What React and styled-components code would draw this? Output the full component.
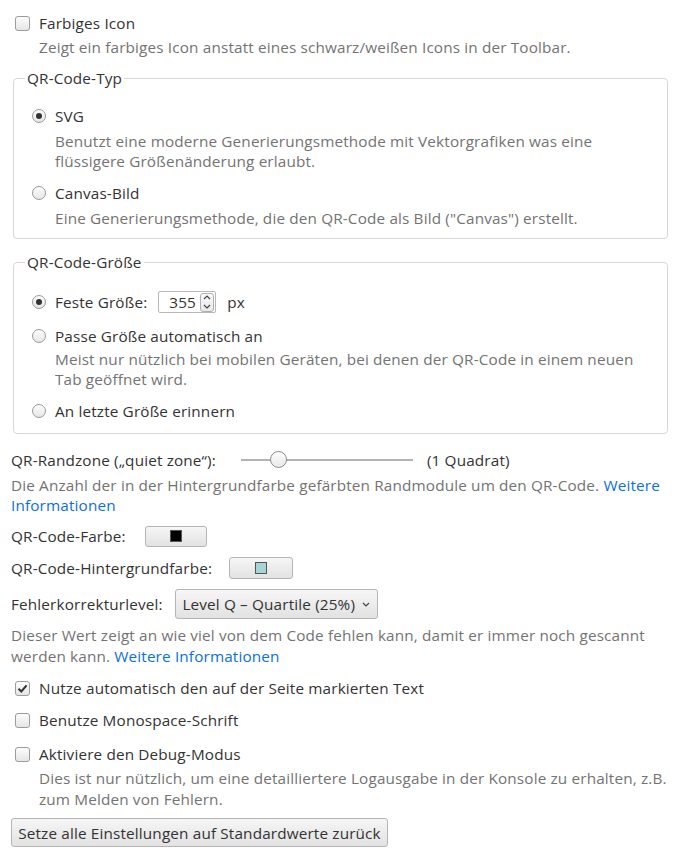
import React from 'react'
import styled, { createGlobalStyle } from 'styled-components'

const GlobalStyle = createGlobalStyle`
  body {
    margin: 0;
    background: #fff;
    font-family: "Open Sans", "DejaVu Sans", sans-serif;
    font-size: 15.3px;
    letter-spacing: 0.15px;
    color: #333;
  }
`

const Page = styled.div`
  padding: 11px 12px 8px 13px;
  width: 655px;
`

const Row = styled.label`
  display: flex;
  align-items: center;
  height: 24px;
  gap: 9px;
  padding-left: ${p => p.indent ?? 2}px;
`

const Desc = styled.div`
  color: #737373;
  line-height: ${p => p.lh ?? 20}px;
  padding-left: ${p => p.indent ?? 26}px;
  margin-top: ${p => p.top ?? 2}px;
`

const Block = styled.div`
  margin-bottom: ${p => p.gap ?? 10}px;
  margin-left: ${p => p.shift ?? 0}px;
  margin-top: ${p => p.top ?? 0}px;
`

const Box = styled.span`
  width: 15px;
  height: 15px;
  box-sizing: border-box;
  border: 1px solid #9b9b9b;
  border-radius: 3px;
  background: linear-gradient(#fcfcfc, #e6e6e6);
  display: flex;
  align-items: center;
  justify-content: center;
  flex: none;
`

const Radio = styled.span`
  width: 14px;
  height: 14px;
  box-sizing: border-box;
  border: 1px solid #9b9b9b;
  border-radius: 50%;
  background: linear-gradient(#fcfcfc, #e6e6e6);
  display: flex;
  align-items: center;
  justify-content: center;
  flex: none;
  &::after {
    content: '';
    width: 6px;
    height: 6px;
    border-radius: 50%;
    background: ${p => (p.checked ? '#333' : 'transparent')};
  }
`

const Fieldset = styled.fieldset`
  margin: ${p => p.top ?? 0}px 0 0 0;
  border: 1px solid #d6d6d6;
  border-radius: 4px;
  padding: ${p => p.pt ?? 16}px 17px 10px 17px;
`

const Legend = styled.legend`
  padding: 0 2px;
  margin-left: -6px;
  line-height: 20px;
`

const Line = styled.div`
  display: flex;
  align-items: center;
  gap: ${p => p.gap ?? 12}px;
  min-height: 24px;
`

const NumberBox = styled.span`
  display: flex;
  align-items: center;
  justify-content: space-between;
  width: 58px;
  height: 22px;
  box-sizing: border-box;
  border: 1px solid #b8b8b8;
  border-radius: 2px;
  padding: 0 1px 0 10px;
`

const Spin = styled.span`
  width: 14px;
  height: 19px;
  box-sizing: border-box;
  border: 1px solid #b0b0b0;
  border-radius: 3px;
  background: linear-gradient(#fafafa, #e8e8e8);
  display: flex;
  flex-direction: column;
  align-items: center;
  justify-content: space-around;
`

const Track = styled.span`
  position: relative;
  width: 172px;
  height: 2px;
  background: #b3b3b3;
  margin: 0 2px 0 13px;
`

const Thumb = styled.span`
  position: absolute;
  left: 29px;
  top: -8px;
  width: 17px;
  height: 17px;
  box-sizing: border-box;
  border: 1px solid #8a8a8a;
  border-radius: 50%;
  background: linear-gradient(#fdfdfd, #e9e9e9);
`

const Link = styled.a`
  color: #0a6fe0;
  text-decoration: none;
`

const Button = styled.button`
  font: inherit;
  letter-spacing: inherit;
  color: #333;
  height: ${p => p.h || 21}px;
  width: ${p => p.w}px;
  box-sizing: border-box;
  border: 1px solid #b5b5b5;
  border-radius: 3px;
  background: linear-gradient(#f6f6f6, #e2e2e2);
  display: flex;
  align-items: center;
  justify-content: center;
  gap: 7px;
  padding: 0;
  flex: none;
`

const Swatch = styled.span`
  width: 12px;
  height: 12px;
  box-sizing: border-box;
  border: 1px solid #555;
  background: ${p => p.color};
`

const Check = () => (
  <svg width="11" height="11" viewBox="0 0 11 11">
    <path d="M1.5 5.8 L4.3 8.5 L9.6 2.3" fill="none" stroke="#333" strokeWidth="2" />
  </svg>
)

const Chevron = ({ up }) => (
  <svg width="8" height="5" viewBox="0 0 8 5">
    <path d={up ? 'M1 4 L4 1 L7 4' : 'M1 1 L4 4 L7 1'} fill="none" stroke="#444" strokeWidth="1.2" />
  </svg>
)

function CheckOption({ checked, label, desc, gap }) {
  return (
    <Block gap={gap}>
      <Row>
        <Box>{checked && <Check />}</Box>
        <span>{label}</span>
      </Row>
      {desc && <Desc lh={21}>{desc}</Desc>}
    </Block>
  )
}

function RadioOption({ checked, children, desc, gap, descTop }) {
  return (
    <Block gap={gap}>
      <Row indent={1}>
        <Radio checked={checked} />
        {children}
      </Row>
      {desc && <Desc indent={24} top={descTop ?? 3}>{desc}</Desc>}
    </Block>
  )
}

export default function App() {
  return (
    <Page>
      <GlobalStyle />
      <CheckOption
        label="Farbiges Icon"
        desc="Zeigt ein farbiges Icon anstatt eines schwarz/weißen Icons in der Toolbar."
        gap={10}
      />

      <Fieldset>
        <Legend>QR-Code-Typ</Legend>
        <RadioOption
          checked
          desc="Benutzt eine moderne Generierungsmethode mit Vektorgrafiken was eine flüssigere Größenänderung erlaubt."
          gap={10}
        >
          <span>SVG</span>
        </RadioOption>
        <RadioOption
          desc='Eine Generierungsmethode, die den QR-Code als Bild ("Canvas") erstellt.'
          gap={0}
        >
          <span>Canvas-Bild</span>
        </RadioOption>
      </Fieldset>

      <Fieldset top={13} pt={18}>
        <Legend>QR-Code-Größe</Legend>
        <RadioOption checked gap={10}>
          <Line gap={11}>
            <span>Feste Größe:</span>
            <NumberBox>
              <span>355</span>
              <Spin>
                <Chevron up />
                <Chevron />
              </Spin>
            </NumberBox>
            <span>px</span>
          </Line>
        </RadioOption>
        <RadioOption
          desc="Meist nur nützlich bei mobilen Geräten, bei denen der QR-Code in einem neuen Tab geöffnet wird."
          gap={10}
          descTop={1}
        >
          <span>Passe Größe automatisch an</span>
        </RadioOption>
        <RadioOption gap={0}>
          <span>An letzte Größe erinnern</span>
        </RadioOption>
      </Fieldset>

      <Block gap={9} shift={-2} top={14}>
        <Line gap={12}>
          <span>QR-Randzone („quiet zone“):</span>
          <Track>
            <Thumb />
          </Track>
          <span>(1 Quadrat)</span>
        </Line>
        <Desc indent={0} top={3}>
          Die Anzahl der in der Hintergrundfarbe gefärbten Randmodule um den QR-Code.{' '}
          <Link href="#">Weitere Informationen</Link>
        </Desc>
      </Block>

      <Block gap={8} shift={-2}>
        <Line gap={19}>
          <span>QR-Code-Farbe:</span>
          <Button w={62}>
            <Swatch color="#000" />
          </Button>
        </Line>
      </Block>
      <Block gap={9} shift={-2}>
        <Line gap={17}>
          <span>QR-Code-Hintergrundfarbe:</span>
          <Button w={64} h={22}>
            <Swatch color="#a5d6d6" />
          </Button>
        </Line>
      </Block>
      <Block gap={9} shift={-2}>
        <Line>
          <span>Fehlerkorrekturlevel:</span>
          <Button w={203} h={30}>
            <span>Level Q – Quartile (25%)</span>
            <Chevron />
          </Button>
        </Line>
        <Desc indent={0} top={6} lh={21}>
          Dieser Wert zeigt an wie viel von dem Code fehlen kann, damit er immer noch gescannt werden kann.{' '}
          <Link href="#">Weitere Informationen</Link>
        </Desc>
      </Block>

      <CheckOption checked label="Nutze automatisch den auf der Seite markierten Text" gap={8} />
      <CheckOption label="Benutze Monospace-Schrift" gap={10} />
      <CheckOption
        label="Aktiviere den Debug-Modus"
        desc="Dies ist nur nützlich, um eine detailliertere Logausgabe in der Konsole zu erhalten, z.B. zum Melden von Fehlern."
        gap={8}
      />

      <Button w={377} h={29} style={{ marginLeft: -2 }}>
        Setze alle Einstellungen auf Standardwerte zurück
      </Button>
    </Page>
  )
}
